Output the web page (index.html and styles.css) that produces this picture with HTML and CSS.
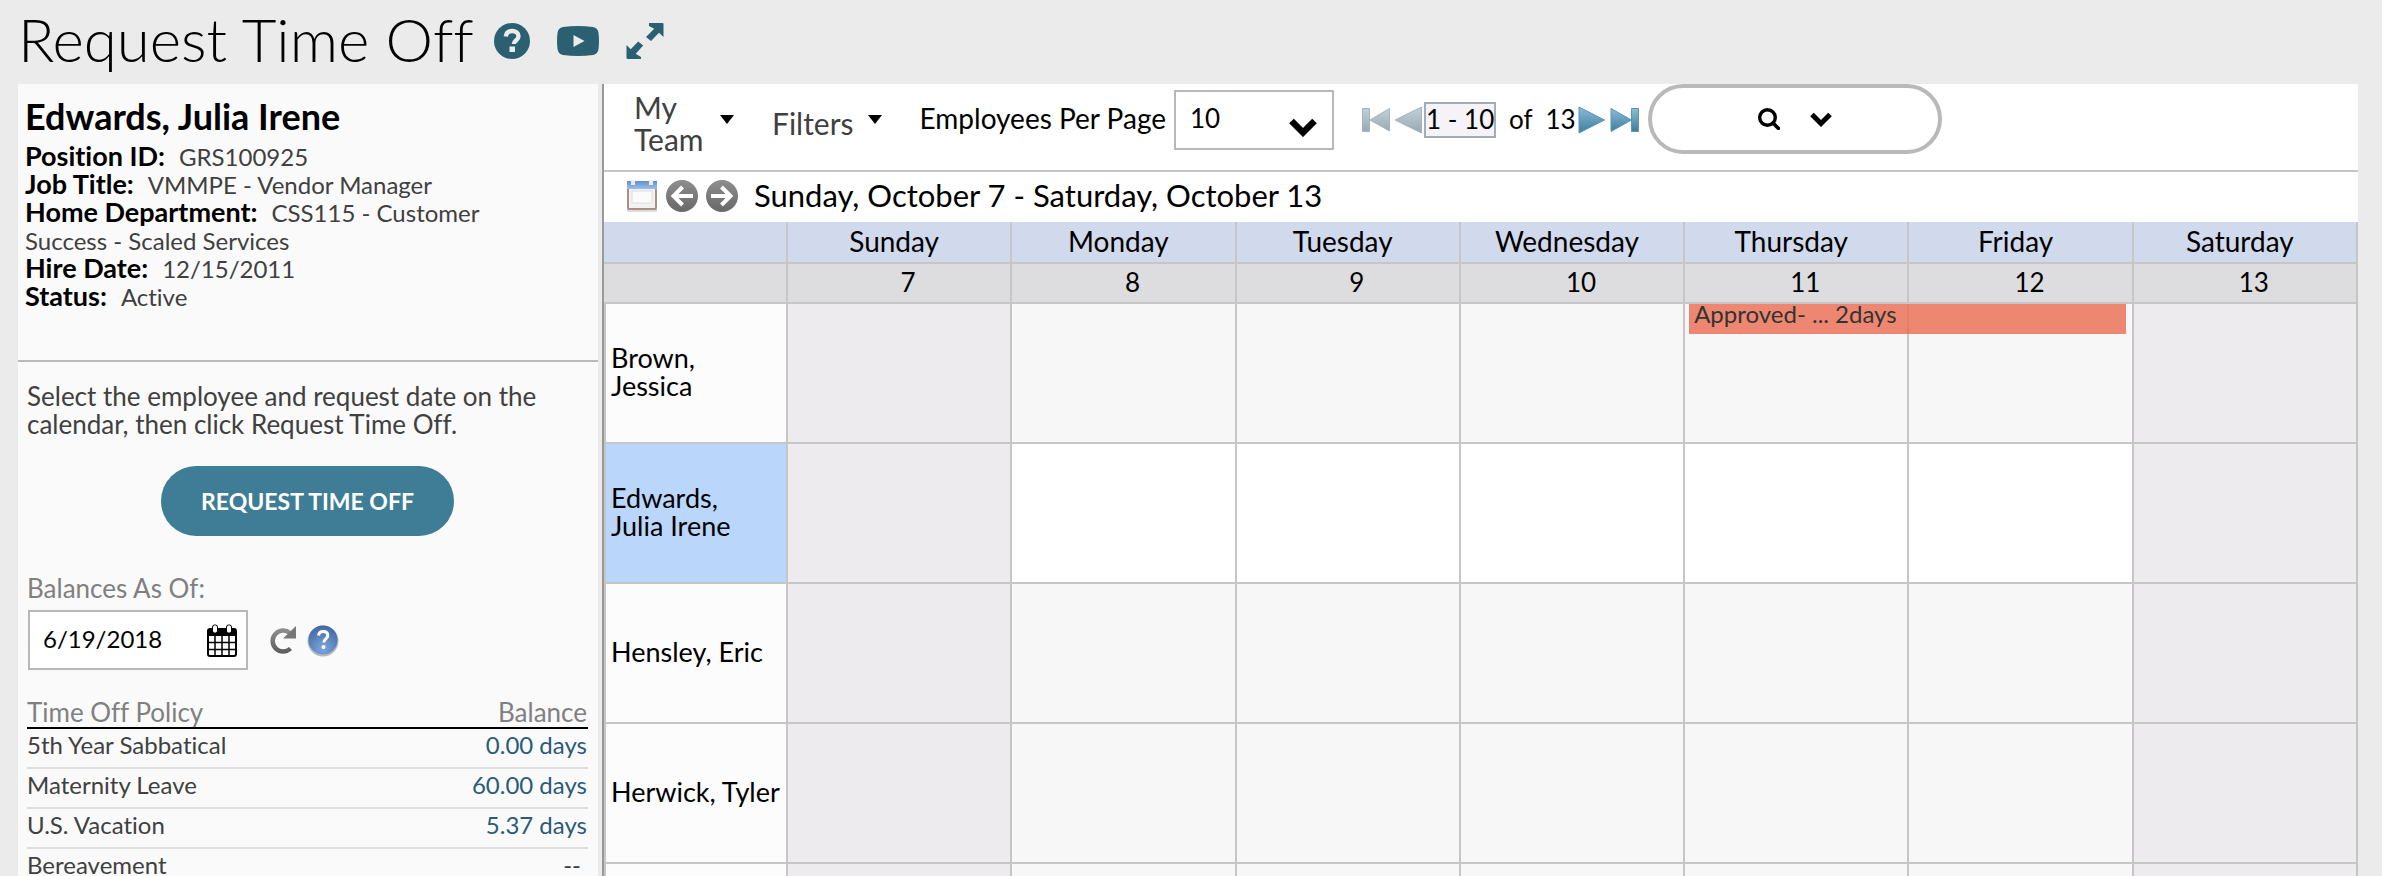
FILE: index.html
```html
<!DOCTYPE html>
<html lang="en">
<head>
<meta charset="utf-8">
<title>Request Time Off</title>
<link rel="stylesheet" href="styles.css">
</head>
<body>
<header class="page-header">
  <h1 class="page-title">Request Time Off</h1>
  <button class="icon-button" type="button" aria-label="Help">
    <svg width="36" height="36" viewBox="0 0 36 36"><circle cx="18" cy="18" r="18" fill="#2b6072"/><path d="M11.8 13.4c.4-3.4 2.9-5.4 6.4-5.4 3.700 0 6.300 2 6.300 5.200 0 4.300-4.600 4.300-4.600 7.800" fill="none" stroke="#ebebeb" stroke-width="4.400"/><rect x="15.500" y="23.500" width="5.500" height="5.500" fill="#ebebeb"/></svg>
  </button>
  <button class="icon-button" type="button" aria-label="Watch video">
    <svg width="42" height="30" viewBox="0 0 42 30"><path d="M6 1Q21-1 36 1Q41 2 41.500 7Q42.500 15 41.500 23Q41 28 36 29Q21 31 6 29Q1 28 .5 23Q-.5 15 .5 7Q1 2 6 1z" fill="#2b6072"/><path d="M16.500 9v12l11-6z" fill="#ebebeb"/></svg>
  </button>
  <button class="icon-button" type="button" aria-label="Expand">
    <svg width="38" height="36" viewBox="0 0 38 36" fill="#2b6072"><path d="M23 0h13.500q1 0 1 1v13l-4.500-4.300-8 8.300-5-4 8.200-8.200L23 3z"/><path d="M15 36H2q-1.500 0-1.500-1.500V22l4.200 4.300 7.500-7.800 5 4-7.500 8.200L15 34z"/></svg>
  </button>
</header>

<div class="layout">
  <aside class="sidebar">
    <section class="profile">
      <h2 class="profile-name">Edwards, Julia Irene</h2>
      <dl class="profile-facts">
        <div><dt>Position ID:</dt><dd>GRS100925</dd></div>
        <div><dt>Job Title:</dt><dd>VMMPE - Vendor Manager</dd></div>
        <div><dt>Home Department:</dt><dd>CSS115 - Customer Success - Scaled Services</dd></div>
        <div><dt>Hire Date:</dt><dd>12/15/2011</dd></div>
        <div><dt>Status:</dt><dd>Active</dd></div>
      </dl>
    </section>
    <section class="request">
      <p class="hint">Select the employee and request date on the calendar, then click Request Time Off.</p>
      <button class="primary" type="button">REQUEST TIME OFF</button>
      <label class="balances-label" for="as-of">Balances As Of:</label>
      <div class="date-line">
        <div class="date-field">
          <input id="as-of" type="text" value="6/19/2018">
          <svg width="30" height="33" viewBox="0 0 30 33"><rect x="1" y="5" width="28" height="27" rx="2" fill="#fff" stroke="#000" stroke-width="2"/><path d="M1 5h28v7H1z"/><path d="M8 12v20M15 12v20M22 12v20M1 18.500h28M1 25.500h28" stroke="#000" stroke-width="1.500"/><rect x="5.500" y="1" width="5" height="8" rx="2" fill="#fff" stroke="#000"/><rect x="19.500" y="1" width="5" height="8" rx="2" fill="#fff" stroke="#000"/></svg>
        </div>
        <button class="icon-button" type="button" aria-label="Refresh">
          <svg width="27" height="28" viewBox="0 0 27 28"><defs><linearGradient id="refreshGrey" x1="0" y1="0" x2="0" y2="1"><stop offset="0" stop-color="#8c8c8c"/><stop offset="1" stop-color="#606060"/></linearGradient></defs><path d="M20.500 22.500A10.500 10.500 0 1 1 20 7" fill="none" stroke="url(#refreshGrey)" stroke-width="4.500"/><path d="M26 0v12.500H13z" fill="#777"/></svg>
        </button>
        <button class="icon-button" type="button" aria-label="Balance help">
          <svg width="32" height="33" viewBox="0 0 32 33"><defs><radialGradient id="helpBlue" cx=".5" cy=".8" r=".8"><stop offset="0" stop-color="#7ba7de"/><stop offset="1" stop-color="#41679f"/></radialGradient></defs><circle cx="16" cy="17" r="15.500" fill="#bbb"/><circle cx="16" cy="16" r="14.500" fill="url(#helpBlue)"/><path d="M11.500 11.500c.5-3 2.300-4 4.700-4 2.700 0 4.600 1.500 4.600 4 0 3.200-4 3.500-4 7" fill="none" stroke="#fff" stroke-width="3"/><circle cx="16.500" cy="23" r="2" fill="#fff"/></svg>
        </button>
      </div>
      <table class="balances">
        <thead><tr><th scope="col">Time Off Policy</th><th scope="col">Balance</th></tr></thead>
        <tbody>
          <tr><td>5th Year Sabbatical</td><td><a href="#">0.00 days</a></td></tr>
          <tr><td>Maternity Leave</td><td><a href="#">60.00 days</a></td></tr>
          <tr><td>U.S. Vacation</td><td><a href="#">5.37 days</a></td></tr>
          <tr><td>Bereavement</td><td class="none">--</td></tr>
        </tbody>
      </table>
    </section>
  </aside>

  <main class="calendar">
    <div class="toolbar">
      <button class="menu menu-team" type="button"><span>My Team</span><svg width="14" height="9" viewBox="0 0 14 9"><path d="M0 0h14L7 9z"/></svg></button>
      <button class="menu menu-filters" type="button"><span>Filters</span><svg width="14" height="9" viewBox="0 0 14 9"><path d="M0 0h14L7 9z"/></svg></button>
      <label class="per-page-label" for="per-page">Employees Per Page</label>
      <div class="per-page">
        <select id="per-page"><option>10</option><option>20</option></select>
        <svg width="28" height="19" viewBox="0 0 28 19"><path d="M2.500 3L14 14.500 25.500 3" fill="none" stroke="#000" stroke-width="6.500"/></svg>
      </div>
      <nav class="pager" aria-label="Employee pages">
        <svg width="0" height="0" class="defs"><defs>
          <linearGradient id="pagerOff" x1="0" y1="0" x2="0" y2="1"><stop offset="0" stop-color="#c3d2d9"/><stop offset="1" stop-color="#96a8b2"/></linearGradient>
          <linearGradient id="pagerOn" x1="0" y1="0" x2="0" y2="1"><stop offset="0" stop-color="#8bbdd6"/><stop offset="1" stop-color="#3f7c9f"/></linearGradient>
        </defs></svg>
        <button class="icon-button" type="button" aria-label="First page"><svg width="28" height="28" viewBox="0 0 28 28" fill="url(#pagerOff)" stroke="#a3b3bc"><path d="M.5 2.500h7v23h-7zM27.500 2.500v22.500L8 14z"/></svg></button>
        <button class="icon-button" type="button" aria-label="Previous page"><svg width="28" height="28" viewBox="0 0 28 28" fill="url(#pagerOff)" stroke="#a3b3bc"><path d="M27.500 1v26L1 14z"/></svg></button>
        <output class="range">1 - 10</output>
        <span class="total">of&nbsp; 13</span>
        <button class="icon-button" type="button" aria-label="Next page"><svg width="28" height="30" viewBox="0 0 28 30" fill="url(#pagerOn)" stroke="#5b96b5"><path d="M1 2v26l25.500-13z"/></svg></button>
        <button class="icon-button" type="button" aria-label="Last page"><svg width="30" height="28" viewBox="0 0 30 28" fill="url(#pagerOn)" stroke="#5b96b5"><path d="M1 2.500v23L21.500 14zM21.500 2.500h7v23h-7z"/></svg></button>
      </nav>
      <div class="search">
        <button class="icon-button" type="button" aria-label="Search"><svg width="22" height="22" viewBox="0 0 22 22" fill="none" stroke="#000"><circle cx="9.500" cy="9.500" r="7.800" stroke-width="3.400"/><path d="M15 15l5.500 5.500" stroke-width="3.600" stroke-linecap="round"/></svg></button>
        <button class="icon-button" type="button" aria-label="Search options"><svg width="22" height="15" viewBox="0 0 22 15"><path d="M2 2.500l9 9 9-9" fill="none" stroke="#000" stroke-width="5"/></svg></button>
      </div>
    </div>

    <div class="week-bar">
      <button class="icon-button" type="button" aria-label="Choose date">
        <svg width="32" height="33" viewBox="0 0 32 33"><defs><linearGradient id="calBlue" x1="0" y1="0" x2="0" y2="1"><stop offset="0" stop-color="#5f8fd0"/><stop offset="1" stop-color="#9fc0e6"/></linearGradient></defs><rect x="1" y="29" width="30" height="3" fill="#ddd"/><rect x="2" y="4" width="28" height="25" rx="1" fill="#f2f2f2" stroke="#a98f86" stroke-width="2"/><path d="M1 1h30v8H1z" fill="url(#calBlue)"/><rect x="6" y="11" width="20" height="12" fill="#fbfbfb" stroke="#ddd"/><path d="M7 0v5M25 0v5" stroke="#e8eef5" stroke-width="4"/></svg>
      </button>
      <button class="icon-button" type="button" aria-label="Previous week">
        <svg width="32" height="32" viewBox="0 0 32 32"><defs><linearGradient id="arrowGrey" x1="0" y1="0" x2="0" y2="1"><stop offset="0" stop-color="#8e8e8e"/><stop offset="1" stop-color="#686868"/></linearGradient></defs><circle cx="16" cy="16" r="16" fill="url(#arrowGrey)"/><path d="M27 16H8M16.500 7L7.500 16l9 9" fill="none" stroke="#fff" stroke-width="4"/></svg>
      </button>
      <button class="icon-button" type="button" aria-label="Next week">
        <svg width="32" height="32" viewBox="0 0 32 32"><circle cx="16" cy="16" r="16" fill="url(#arrowGrey)"/><path d="M5 16h19M15.500 7l9 9-9 9" fill="none" stroke="#fff" stroke-width="4"/></svg>
      </button>
      <h2 class="week-title">Sunday, October 7 - Saturday, October 13</h2>
    </div>

    <table class="week">
      <colgroup><col class="name-col"><col span="7"></colgroup>
      <thead>
        <tr class="days"><th></th><th scope="col">Sunday</th><th scope="col">Monday</th><th scope="col">Tuesday</th><th scope="col">Wednesday</th><th scope="col">Thursday</th><th scope="col">Friday</th><th scope="col">Saturday</th></tr>
        <tr class="dates"><th></th><th>7</th><th>8</th><th>9</th><th>10</th><th>11</th><th>12</th><th>13</th></tr>
      </thead>
      <tbody>
        <tr><th scope="row">Brown,<br>Jessica</th><td class="weekend"></td><td></td><td></td><td></td><td><div class="event">Approved- ... 2days</div></td><td></td><td class="weekend"></td></tr>
        <tr class="selected"><th scope="row">Edwards,<br>Julia Irene</th><td class="weekend"></td><td></td><td></td><td></td><td></td><td></td><td class="weekend"></td></tr>
        <tr><th scope="row">Hensley, Eric</th><td class="weekend"></td><td></td><td></td><td></td><td></td><td></td><td class="weekend"></td></tr>
        <tr><th scope="row">Herwick, Tyler</th><td class="weekend"></td><td></td><td></td><td></td><td></td><td></td><td class="weekend"></td></tr>
        <tr><th></th><td class="weekend"></td><td></td><td></td><td></td><td></td><td></td><td class="weekend"></td></tr>
      </tbody>
    </table>
  </main>
</div>
</body>
</html>
```
FILE: styles.css
```css
* { box-sizing: border-box; }

body {
  margin: 0;
  height: 100vh;
  overflow: hidden;
  display: flex;
  flex-direction: column;
  background: #ebebeb;
  color: #000;
  font-family: Lato, "Open Sans", sans-serif;
  font-size: 26px;
  font-variant-ligatures: none;
  line-height: 28px;
}

h1, h2, p, dl, dd { margin: 0; }
button, input, select { font: inherit; color: inherit; }
svg { display: block; flex: none; }

.icon-button {
  padding: 0;
  border: 0;
  background: none;
  flex: none;
}

.page-header {
  display: flex;
  align-items: center;
  gap: 27px;
  height: 84px;
  padding: 0 18px 2px;
  flex: none;
}
.page-title {
  font-size: 60px;
  font-weight: 300;
  line-height: 72px;
  margin-right: -7px;
  padding-bottom: 4px;
}

.layout {
  display: flex;
  flex: 1;
  min-height: 0;
  padding: 0 24px 0 18px;
}

/* Employee panel */
.sidebar {
  width: 580px;
  margin-right: 4px;
  flex: none;
  background: #fafafa;
  overflow: hidden;
}
.profile {
  min-height: 278px;
  padding: 12px 60px 0 7px;
  border-bottom: 2px solid #bababa;
}
.profile-name {
  font-size: 36px;
  line-height: 40px;
  margin-bottom: 6px;
}
.profile-facts dt,
.profile-facts dd { display: inline; line-height: 22px; }
.profile-facts dt { font-size: 27px; font-weight: 700; margin-right: 14px; }
.profile-facts dd { font-size: 24px; color: #404040; }

.request {
  display: flex;
  flex-direction: column;
  padding: 20px 10px 0 9px;
}
.hint { color: #404040; }
.primary {
  align-self: center;
  margin: 28px 0 38px;
  padding: 0 40px;
  height: 70px;
  border: 0;
  border-radius: 35px;
  background: #3e7d95;
  color: #fff;
  font-size: 23px;
  font-weight: 700;
}
.balances-label { color: #808080; margin: 0 0 8px; }
.date-line { display: flex; align-items: center; gap: 10px; }
.date-field {
  display: flex;
  align-items: center;
  width: 220px;
  height: 60px;
  margin: 0 12px 0 1px;
  padding-right: 9px;
  border: 2px solid #b8b8b8;
  background: #fff;
}
.date-field input {
  flex: 1;
  min-width: 0;
  height: 100%;
  padding: 0 0 4px 13px;
  border: 0;
  background: none;
  font-size: 24px;
}

.balances {
  width: 100%;
  margin-top: 26px;
  border-collapse: collapse;
  font-size: 24px;
  color: #404040;
}
.balances th,
.balances td { padding: 0; text-align: left; }
.balances th {
  height: 32px;
  font-weight: 400;
  font-size: 26px;
  color: #808080;
  border-bottom: 2px solid #000;
}
.balances td {
  height: 40px;
  padding-bottom: 6px;
  border-bottom: 2px solid #dedede;
}
.balances th:last-child,
.balances td:last-child { text-align: right; padding-right: 1px; }
.balances td.none:last-child { padding-right: 7px; }
.balances a { color: #2b5b77; text-decoration: none; }

/* Team calendar */
.calendar {
  flex: 1;
  min-width: 0;
  border-left: 2px solid #999;
  background: #fff;
  overflow: hidden;
}
.toolbar {
  display: flex;
  align-items: flex-start;
  height: 88px;
  border-bottom: 2px solid #c6c6c6;
}
.menu {
  display: flex;
  align-items: center;
  padding: 0;
  border: 0;
  background: none;
  color: #404040;
  font-size: 30px;
  line-height: 32px;
  text-align: left;
}
.menu svg { margin-bottom: 8px; fill: #000; }
.menu-team { width: 100px; margin: 7px 38px 0 30px; gap: 12px; }
.menu-team span { width: 74px; }
.menu-filters { gap: 14px; margin: 23px 38px 0 0; }
.per-page-label { margin-top: 20px; font-size: 28px; white-space: nowrap; }
.per-page { display: grid; align-items: center; width: 160px; margin: 6px 28px 0 8px; }
.per-page select,
.per-page svg { grid-area: 1 / 1; }
.per-page select {
  appearance: none;
  width: 100%;
  height: 60px;
  padding: 0 14px 4px;
  border: 2px solid #b8b8b8;
  border-radius: 0;
  background: #fff;
}
.per-page svg { justify-self: end; margin: 14px 17px 0 0; pointer-events: none; }
.pager { display: flex; align-items: center; gap: 4px; margin: 18px 8px 0 0; }
.defs { position: absolute; }
.range {
  width: 72px;
  height: 36px;
  margin-left: -2px;
  border: 2px solid #a4adb5;
  background: #f5f3f8;
  line-height: 30px;
  text-align: center;
  white-space: nowrap;
}
.total { margin: 0 -2px 0 9px; padding-bottom: 2px; white-space: nowrap; }
.search {
  display: flex;
  align-items: center;
  justify-content: center;
  gap: 30px;
  width: 294px;
  height: 70px;
  border: 4px solid #b9b9b9;
  border-radius: 35px;
}

.week-bar {
  display: flex;
  align-items: center;
  gap: 8px;
  height: 50px;
  padding: 0 22px 2px;
}
.week-title {
  margin-left: 8px;
  padding-bottom: 2px;
  font-size: 31px;
  font-weight: 400;
  line-height: 40px;
}

.week {
  width: 100%;
  table-layout: fixed;
  border-collapse: separate;
  border-spacing: 0;
}
.name-col { width: 184px; }
.week th,
.week td {
  padding: 0;
  font-weight: 400;
  border-right: 2px solid #c6c6c6;
  border-bottom: 2px solid #c6c6c6;
}
.week .days th { height: 42px; padding: 0 10px 2px 0; background: #d1daec; font-size: 28px; }
.week .dates th { height: 40px; padding: 0 0 2px 18px; background: #dddddf; }
.week tbody th {
  height: 140px;
  padding: 0 0 2px 5px;
  border-left: 2px solid #c6c6c6;
  background: #fcfcfc;
  font-size: 27px;
  text-align: left;
  white-space: nowrap;
}
.week tbody td { position: relative; background: #f7f7f7; }
.week .selected th { background: #bbd6fb; }
.week .selected td { background: #fff; }
.week tbody td.weekend { background: #edebee; }

/* Runs across two day cells */
.event {
  position: absolute;
  z-index: 1;
  top: 0;
  left: 4px;
  width: calc(200% - 8px);
  height: 30px;
  padding-left: 5px;
  background: rgba(236, 104, 76, 0.78);
  color: #333;
  font-size: 24px;
  line-height: 20px;
}
```
